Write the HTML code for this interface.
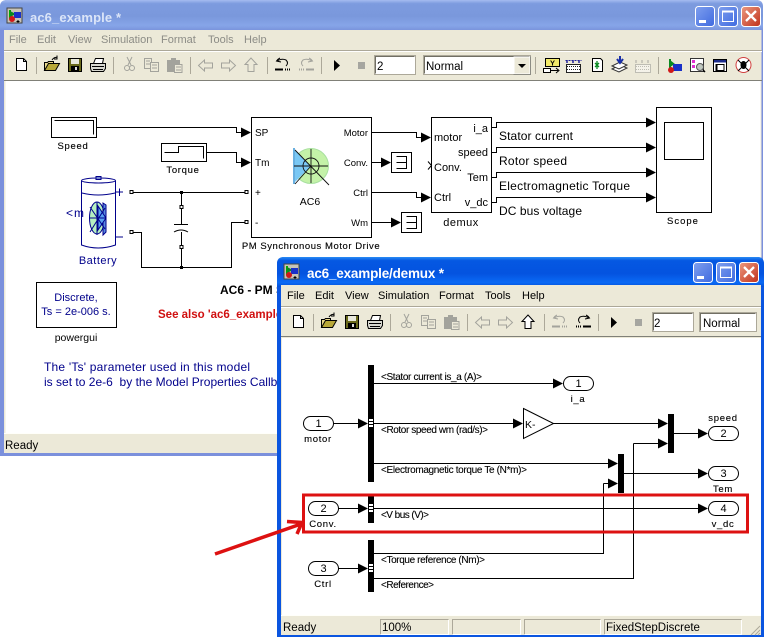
<!DOCTYPE html>
<html><head><meta charset="utf-8"><title>ac6_example</title>
<style>
html,body{margin:0;padding:0;background:#fff;width:765px;height:637px;overflow:hidden}
svg{display:block;position:absolute;left:0;top:0}
text{font-family:"Liberation Sans",sans-serif;fill:#000}
.c{text-anchor:middle}
.m{font-size:11px;fill:#8c8c86}
.mf{font-size:11px;fill:#000}
.l{font-size:9.5px;letter-spacing:.7px;stroke:#000;stroke-width:.12}
.s{font-size:11px}
.w{fill:none;stroke:#000;stroke-width:1;shape-rendering:crispEdges}
.b{fill:#fff;stroke:#000;stroke-width:1;shape-rendering:crispEdges}
.g{fill:none;stroke:#a3a39c;stroke-width:1}
</style></head><body>
<svg width="765" height="637" viewBox="0 0 765 637" xmlns="http://www.w3.org/2000/svg">
<defs>
<linearGradient id="tb" x1="0" y1="0" x2="0" y2="1"><stop offset="0" stop-color="#a5bcf0"/><stop offset=".12" stop-color="#7d9bdf"/><stop offset=".55" stop-color="#7a98dc"/><stop offset=".85" stop-color="#86a5e8"/><stop offset="1" stop-color="#7a94dc"/></linearGradient>
<linearGradient id="tf" x1="0" y1="0" x2="0" y2="1"><stop offset="0" stop-color="#2a8cf5"/><stop offset=".12" stop-color="#0558e2"/><stop offset=".55" stop-color="#0453e0"/><stop offset=".85" stop-color="#0a6af5"/><stop offset="1" stop-color="#0350d8"/></linearGradient>
<linearGradient id="bb" x1="0" y1="0" x2="1" y2="1"><stop offset="0" stop-color="#7f9fee"/><stop offset="1" stop-color="#3f6ae0"/></linearGradient>
<linearGradient id="bc" x1="0" y1="0" x2="1" y2="1"><stop offset="0" stop-color="#ec9a80"/><stop offset="1" stop-color="#c0301a"/></linearGradient>
<path id="ar" d="M-10 -5L0 0L-10 5z" fill="#000"/>
<g id="appicon">
<rect x="0" y="0" width="15" height="15" fill="#c8c4b8" stroke="#444"/>
<path d="M3 2v9" stroke="#0a0" stroke-width="2"/>
<path d="M3 3l6 3-6 3z" fill="#0a8a20"/>
<rect x="7" y="4" width="7" height="6" fill="#1a30c8"/>
<circle cx="5" cy="11" r="3" fill="#d01818"/>
<path d="M11 12v3M9.5 13.500h3" stroke="#000"/>
</g>
<g id="wbtn-min"><rect x=".5" y=".5" width="19" height="20" rx="3" fill="url(#bb)" stroke="#fff"/><rect x="4" y="14" width="7" height="3" fill="#fff"/></g>
<g id="wbtn-max"><rect x=".5" y=".5" width="19" height="20" rx="3" fill="url(#bb)" stroke="#fff"/><path d="M4.500 5.500h11v10h-11z" fill="none" stroke="#fff"/><path d="M4 5.500h12" stroke="#fff" stroke-width="2"/></g>
<g id="wbtn-close"><rect x=".5" y=".5" width="19" height="20" rx="3" fill="url(#bc)" stroke="#fff"/><path d="M5 5l10 10M15 5L5 15" stroke="#fff" stroke-width="2.300"/></g>
<g id="tools">
<path d="M16.500 58.500h7l3 3v9h-10z" fill="#fff" stroke="#000"/><path d="M23.500 58.500v3h3" fill="none" stroke="#000"/>
<path d="M36.500 57v17M113.500 57v17M190.500 57v17M267.500 57v17M321.500 57v17" stroke="#aca899"/>
<path d="M44.500 70.500v-8h3l1-1h5v2" fill="#e8d88a" stroke="#000"/>
<path d="M44.500 70.500l4-7h11l-4 7z" fill="#b8a838" stroke="#000"/>
<path d="M52 60q2-3 5-2.500M57 55.500v3.500h-3" fill="none" stroke="#000"/>
<rect x="68.500" y="58.500" width="13" height="13" fill="#6a6a1c" stroke="#000"/>
<rect x="71" y="59" width="8" height="5" fill="#e8e8dc"/><rect x="71" y="66" width="8" height="5" fill="#000"/><rect x="75" y="67" width="2" height="3" fill="#ddd"/>
<path d="M93.500 63.500l2-5h8l-1 5" fill="#fff" stroke="#000"/>
<path d="M90.500 63.500h15v5l-2 3h-12l-1-3z" fill="#d8d8d0" stroke="#000"/>
<path d="M92 66.500h12M93 69.500h10" stroke="#000"/>
<path d="M127 57l4 8M132 57l-4 8" class="g"/><circle cx="127" cy="68" r="2.500" class="g"/><circle cx="132" cy="68" r="2.500" class="g"/>
<path d="M144.500 58.500h7v10h-7z" fill="#ece9d8" stroke="#a3a39c"/><path d="M150.500 62.500h8v9h-8z" fill="#ece9d8" stroke="#a3a39c"/><path d="M146 61h4M146 64h4M152 65h5M152 68h5" stroke="#a3a39c"/>
<path d="M167.500 60.500h12v11h-12z" fill="#a3a39c" stroke="#a3a39c"/><rect x="171" y="58" width="5" height="3" fill="#a3a39c"/>
<path d="M174.500 64.500h7.500v8h-7.500z" fill="#ece9d8" stroke="#a3a39c"/><path d="M176 67h5M176 70h5" stroke="#a3a39c"/>
<path d="M198.500 65.500l6-5.500v3h8v5h-8v3z" fill="#ece9d8" stroke="#a3a39c"/>
<path d="M235.500 65.500l-6-5.500v3h-8v5h8v3z" fill="#ece9d8" stroke="#a3a39c"/>
<path d="M334 60v11l6-5.500z" fill="#000"/>
<rect x="358" y="62" width="7" height="7" fill="#a6a6a0"/>
</g>
</defs>

<!-- BACK WINDOW -->
<path d="M0 456V7Q0 0 7 0H756Q763 0 763 7V456z" fill="#7b90dc"/>
<path d="M0 30V7Q0 0 7 0H756Q763 0 763 7V30z" fill="url(#tb)"/>
<rect x="4" y="30" width="757.500" height="423" fill="#ece9d8"/>
<use href="#appicon" x="7" y="8"/>
<text x="30" y="22" font-size="13" font-weight="700" style="fill:#dbe5f8" textLength="91">ac6_example *</text>
<use href="#wbtn-min" x="695" y="6"/><use href="#wbtn-max" x="718" y="6"/><use href="#wbtn-close" x="741" y="6"/>
<text class="m" x="9" y="43">File</text><text class="m" x="37" y="43">Edit</text><text class="m" x="68" y="43">View</text><text class="m" x="101" y="43">Simulation</text><text class="m" x="161" y="43">Format</text><text class="m" x="208" y="43">Tools</text><text class="m" x="244" y="43">Help</text>
<path d="M4 50.500H762" stroke="#aca899"/><path d="M4 51.500H762" stroke="#fff"/>
<use href="#tools"/>
<path d="M245 64.500l6-6.500 6 6.500h-3v7h-6v-7z" fill="#ece9d8" stroke="#a3a39c"/>
<path d="M280 58q-2 1-3.500 3l4.500 1M277 61q5-3 9 -1q3 3 0 6" fill="none" stroke="#000"/><path d="M275 69.500h8" stroke="#000" stroke-width="2"/><path d="M285 69.500h5" stroke="#000" stroke-dasharray="1 1" stroke-width="2"/>
<path d="M309 58q2 1 3.500 3l-4.500 1M312 61q-5-3-9-1q-3 3 0 6" fill="none" stroke="#a3a39c"/><path d="M306 69.500h8" stroke="#a3a39c" stroke-width="2"/><path d="M299 69.500h5" stroke="#a3a39c" stroke-dasharray="1 1" stroke-width="2"/>
<rect x="374.500" y="55.500" width="41" height="19" fill="#fff" stroke="#aca899"/><path d="M375.500 73.500v-17h39" fill="none" stroke="#716f64"/>
<text x="377" y="70" font-size="11.500">2</text>
<rect x="423.500" y="55.500" width="107" height="19" fill="#fff" stroke="#aca899"/><path d="M424.500 73.500v-17h105" fill="none" stroke="#716f64"/>
<text x="426" y="70" font-size="11.500">Normal</text>
<rect x="514" y="57" width="16" height="17" fill="#ece9d8" stroke="#fff"/><path d="M530.500 56.500v18h-17" fill="none" stroke="#8c8c84"/><path d="M518 64h8l-4 4z" fill="#000"/>
<path d="M535.500 57v17M658.500 57v17" stroke="#aca899"/>
<rect x="545.500" y="58.500" width="14" height="8" fill="#f2ea6a" stroke="#000"/><text x="552.500" y="65.500" class="c" font-size="7.500" font-weight="700">Y</text>
<rect x="543.500" y="68.500" width="7" height="4" fill="#fff" stroke="#000"/><path d="M551 70.500h7M556 68l3 2.500-3 2.500" fill="none" stroke="#000"/>
<path d="M567 60v3M573 60v3M579 60v3" stroke="#22229a" stroke-width="1.500"/><path d="M565.500 60.500h16" stroke="#22229a" stroke-dasharray="2 1"/>
<rect x="566.500" y="64.500" width="14" height="8" fill="#fff" stroke="#222"/><path d="M567 66.500h14M567 69.500h14" stroke="#222" stroke-dasharray="1 1"/>
<path d="M592.500 58.500h8l2 2v11h-10z" fill="#fff" stroke="#000"/><path d="M597 61v4M595 63l2 2 2-2M597 69v-3M595 67l2-2 2 2" fill="none" stroke="#0a8a20" stroke-width="1.300"/>
<path d="M612 69l8-4 7 3-8 4z" fill="#fff" stroke="#333"/><path d="M612 66l8-4 7 3-8 4z" fill="#fff" stroke="#333"/><path d="M620 56v6M617 59l3 4 3-4" fill="none" stroke="#1a30a8" stroke-width="2"/>
<g opacity=".45"><path d="M636 60v3M642 60v3M648 60v3" stroke="#888" stroke-width="1.500"/><rect x="635.500" y="64.500" width="15" height="8" fill="#fff" stroke="#888"/><path d="M636 66.500h14M636 69.500h14" stroke="#888" stroke-dasharray="1 1"/></g>
<path d="M670 59v10" stroke="#0a8a20" stroke-width="2"/><path d="M670 60l5 4-5 3z" fill="#0a8a20"/><rect x="673" y="64" width="9" height="7" fill="#1a30c8"/><circle cx="671" cy="70" r="3" fill="#d01818"/>
<rect x="690.500" y="58.500" width="13" height="13" fill="#fff" stroke="#333"/><rect x="692" y="60" width="3" height="3" fill="#e030d0"/><rect x="692" y="65" width="3" height="3" fill="#e030d0"/><circle cx="700" cy="67" r="3.500" fill="#c0c8c0" stroke="#555"/><path d="M703 70l2 2" stroke="#000" stroke-width="1.500"/>
<rect x="713.500" y="59.500" width="13" height="12" fill="#fff" stroke="#000"/><rect x="714" y="60" width="12" height="2.500" fill="#1a2a8a"/><path d="M717 64.500h7v6h-7zM716 64v8" fill="none" stroke="#000"/>
<circle cx="743.500" cy="65" r="7.500" fill="#fff" stroke="#d04040"/><path d="M738 60l11 11M749 60l-11 11" stroke="#000" stroke-width="1"/><ellipse cx="743.500" cy="65" rx="3" ry="4" fill="#000"/>
<path d="M4 80.500H762" stroke="#808078"/>
<rect x="5.500" y="81" width="755" height="352" fill="#fff"/>
<path d="M4 433.500H762" stroke="#fffffa"/>
<text x="5" y="449" font-size="11.500">Ready</text>

<!-- BACK DIAGRAM -->
<rect class="b" x="51.500" y="117.500" width="45" height="20"/><path class="w" d="M54.500 120.500H93.500V134.500"/>
<text class="l c" x="73" y="149">Speed</text>
<rect class="b" x="161.500" y="143.500" width="45" height="18"/><path class="w" d="M164.500 152.500H178.500V146.500H203.500V158.500"/>
<text class="l c" x="183" y="173">Torque</text>
<path class="w" d="M97 127.500H236.500V132.500H241M207 152.500H236.500V162.500H241"/>
<use href="#ar" x="251" y="132.500"/><use href="#ar" x="251" y="162.500"/>
<g fill="none" stroke="#00008b">
<path d="M81.500 181V245Q98 251 115.500 245V181"/><ellipse cx="98.500" cy="180.500" rx="17" ry="2.500"/><rect x="96" y="176.500" width="5" height="3" fill="#7788cc"/>
<path d="M82 193Q98 197 115 193"/>
<path d="M115.500 192H123M119.500 188.500V196M116 237H123"/>
</g>
<text x="66" y="217" font-size="12" letter-spacing="1" style="fill:#00008b">&lt;m</text>
<ellipse cx="97" cy="218" rx="7.500" ry="16" fill="#b6f0c0" stroke="#00008b"/><path d="M103 203V235L106 232V205z" fill="#5a8ae0" stroke="#00008b"/><path d="M98 206l8 12-8 12z" fill="#5aa0f0" stroke="#00008b"/><path d="M89 218H106M97 202V235M90 207l15 22M90 232l15-24" stroke="#00008b" fill="none"/>
<text x="98" y="264" class="c" font-size="11" letter-spacing=".5" style="fill:#00008b">Battery</text>
<path class="w" d="M133 192.500H245M133 232.500H141.500V267.500H231.500V222.500H245M181.500 192.500V205M181.500 209V224M181.500 232V245M181.500 249V267.500"/>
<rect class="b" x="130" y="190.500" width="3" height="3"/><rect class="b" x="130" y="230.500" width="3" height="3"/><rect class="b" x="245" y="190.500" width="3" height="3"/><rect class="b" x="245" y="220.500" width="3" height="3"/>
<rect class="b" x="180" y="205.500" width="3" height="3"/><rect class="b" x="180" y="245.500" width="3" height="3"/>
<rect x="180" y="191" width="3" height="3"/><rect x="180" y="266" width="3" height="3"/>
<path d="M174 224.500H188" stroke="#000"/><path d="M174 232Q181 228 188 232" stroke="#000" fill="none"/>
<rect class="b" x="251.500" y="117.500" width="120" height="120"/>
<g font-size="10"><text x="255" y="136">SP</text><text x="255" y="166">Tm</text><text x="255" y="196">+</text><text x="255" y="226">-</text></g>
<g font-size="9.500" text-anchor="end"><text x="368" y="136">Motor</text><text x="368" y="166">Conv.</text><text x="368" y="196">Ctrl</text><text x="368" y="226">Wm</text></g>
<circle cx="311" cy="166" r="17.500" fill="#c4f2a8" stroke="#a8e0a0"/>
<path d="M294 149V183L311 166z" fill="#7ac8f4"/><path d="M294 148V184" stroke="#6ab0e0" stroke-width="2"/>
<path d="M294 166H328M311 149V183M295 150L329 185M295 184L311 166" stroke="#111" fill="none" stroke-width=".9"/><circle cx="311" cy="166" r="8" fill="none" stroke="#111" stroke-width=".9"/>
<text x="310" y="205" class="c" font-size="10.500">AC6</text>
<text class="l c" x="311" y="249" style="letter-spacing:.55px">PM Synchronous Motor Drive</text>
<path class="w" d="M372 132.500H416.500V137.500H421M372 162.500H381M372 192.500H416.500V197.500H421M372 222.500H391"/>
<use href="#ar" x="431" y="137.500"/><use href="#ar" x="391" y="162.500"/><use href="#ar" x="431" y="197.500"/><use href="#ar" x="401" y="222.500"/>
<rect class="b" x="391.500" y="152.500" width="20" height="20"/><path class="w" d="M396.500 156.500H406.500V168.500H396.500M396.500 162.500H406.500"/>
<rect class="b" x="401.500" y="212.500" width="20" height="20"/><path class="w" d="M406.500 216.500H416.500V228.500H406.500M406.500 222.500H416.500"/>
<rect class="b" x="431.500" y="117.500" width="60" height="95"/>
<text x="434" y="141" font-size="11">motor</text><text x="434" y="171" font-size="11">Conv.</text><text x="434" y="201" font-size="11">Ctrl</text>
<path d="M428 161.500l3.500 4-3.500 4" fill="none" stroke="#000"/>
<g font-size="11" text-anchor="end"><text x="488" y="132">i_a</text><text x="488" y="156">speed</text><text x="488" y="181">Tem</text><text x="488" y="206">v_dc</text></g>
<text x="461" y="226" class="c" font-size="11" letter-spacing=".5">demux</text>
<path class="w" d="M492 127.500H496.500V122.500H646M492 152.500H496.500V147.500H646M492 177.500H496.500V172.500H646M492 202.500H496.500V197.500H646"/>
<use href="#ar" x="656" y="122.500"/><use href="#ar" x="656" y="147.500"/><use href="#ar" x="656" y="172.500"/><use href="#ar" x="656" y="197.500"/>
<g font-size="12"><text x="499" y="140" textLength="74">Stator current</text><text x="499" y="165" textLength="68">Rotor speed</text><text x="499" y="190" textLength="131">Electromagnetic Torque</text><text x="499" y="215" textLength="83">DC bus voltage</text></g>
<rect class="b" x="656.500" y="107.500" width="55" height="105"/><rect class="b" x="664.500" y="122.500" width="39" height="37"/>
<text class="l c" x="683" y="224" style="letter-spacing:1px">Scope</text>
<text x="220" y="294" font-size="12" font-weight="700">AC6 - PM Synchronous Motor Drive</text>
<text x="158" y="318" font-size="11.500" font-weight="700" style="fill:#d01010">See also 'ac6_example_simple'</text>
<rect class="b" x="36.500" y="282.500" width="80" height="45"/>
<text x="76" y="301" class="c" font-size="11" style="fill:#00008b">Discrete,</text>
<text x="76" y="315" class="c" font-size="11" style="fill:#00008b">Ts = 2e-006 s.</text>
<text x="76" y="341" class="c" font-size="10.500">powergui</text>
<text x="44" y="371" font-size="12" style="fill:#00008b" textLength="206">The 'Ts' parameter used in this model</text>
<text x="44" y="386" font-size="12" style="fill:#00008b;white-space:pre" textLength="252">is set to 2e-6  by the Model Properties Callback</text>

<!-- FRONT WINDOW -->
<path d="M277 637V264Q277 257 284 257H757Q764 257 764 264V637z" fill="#0a55e0"/>
<path d="M277 287V264Q277 257 284 257H757Q764 257 764 264V287z" fill="url(#tf)"/>
<rect x="281" y="285" width="480" height="350" fill="#ece9d8"/>
<use href="#appicon" x="284" y="264"/>
<text x="307" y="278" font-size="13.500" font-weight="700" style="fill:#fff" textLength="137">ac6_example/demux *</text>
<use href="#wbtn-min" x="693" y="262"/><use href="#wbtn-max" x="716" y="262"/><use href="#wbtn-close" x="739" y="262"/>
<text class="mf" x="287" y="299">File</text><text class="mf" x="315" y="299">Edit</text><text class="mf" x="345" y="299">View</text><text class="mf" x="378" y="299">Simulation</text><text class="mf" x="439" y="299">Format</text><text class="mf" x="485" y="299">Tools</text><text class="mf" x="522" y="299">Help</text>
<path d="M281 306.500H761" stroke="#aca899"/><path d="M281 307.500H761" stroke="#fff"/>
<use href="#tools" transform="translate(277,257)"/>
<path d="M522 321.500l6-6.500 6 6.500h-3v7h-6v-7z" fill="#fff" stroke="#000"/>
<path d="M557 315q-2 1-3.500 3l4.500 1M554 318q5-3 9-1q3 3 0 6" fill="none" stroke="#a3a39c"/><path d="M552 326.500h8" stroke="#a3a39c" stroke-width="2"/><path d="M562 326.500h5" stroke="#a3a39c" stroke-dasharray="1 1" stroke-width="2"/>
<path d="M586 315q2 1 3.500 3l-4.500 1M589 318q-5-3-9-1q-3 3 0 6" fill="none" stroke="#000"/><path d="M583 326.500h8" stroke="#000" stroke-width="2"/><path d="M576 326.500h5" stroke="#000" stroke-dasharray="1 1" stroke-width="2"/>
<rect x="652.500" y="312.500" width="41" height="19" fill="#fff" stroke="#aca899"/><path d="M653.500 330.500v-17h39" fill="none" stroke="#716f64"/>
<text x="654" y="327" font-size="11.500">2</text>
<rect x="699.500" y="312.500" width="57" height="19" fill="#fff" stroke="#aca899"/><path d="M700.500 330.500v-17h55" fill="none" stroke="#716f64"/>
<text x="703" y="327" font-size="11.500">Normal</text>
<path d="M281 336.500H761" stroke="#808078"/>
<rect x="282" y="338" width="479" height="277" fill="#fff"/>
<path d="M281 615.500H761" stroke="#fffffa"/>
<text x="283" y="631" font-size="11.500">Ready</text>
<path d="M380.500 634.500V619.500H448.500M452.500 634.500V619.500H520.500M524.500 634.500V619.500H600.500M604.500 634.500V619.500H741.500" fill="none" stroke="#aca899"/>
<path d="M380.500 634.500H448.500V620M452.500 634.500H520.500V620M524.500 634.500H600.500V620M604.500 634.500H741.500V620" fill="none" stroke="#fff"/>
<text x="382" y="631" font-size="11.500">100%</text>
<text x="606" y="631" font-size="11.500">FixedStepDiscrete</text>
<path d="M751 635l9-9M755 635l5-5M758 635l2-2" stroke="#aca899" fill="none"/>

<!-- FRONT DIAGRAM -->
<g>
<rect x="368" y="365" width="6" height="117"/>
<rect x="668" y="414" width="6" height="39"/>
<rect x="618" y="454" width="6" height="39"/>
<rect x="368" y="496" width="6" height="27"/>
<rect x="368" y="540" width="6" height="52"/>
<rect x="369" y="419" width="4" height="2" fill="#fff"/><rect x="369" y="422" width="4" height="2" fill="#fff"/><rect x="369" y="425" width="4" height="2" fill="#fff"/>
<rect x="369" y="504" width="4" height="2" fill="#fff"/><rect x="369" y="507" width="4" height="2" fill="#fff"/><rect x="369" y="510" width="4" height="2" fill="#fff"/>
<rect x="369" y="564" width="4" height="2" fill="#fff"/><rect x="369" y="567" width="4" height="2" fill="#fff"/><rect x="369" y="570" width="4" height="2" fill="#fff"/>
</g>
<path class="w" d="M333 423.500H358M374 383.500H553M374 423.500H513M553 423.500H658M674 433.500H698M374 463.500H608M603.500 483.500H608M603.500 483.500V553.500H374M633.500 443.500H658M633.500 443.500V578.500H374M624 473.500H698M338 508.500H358M374 508.500H698M338 568.500H358"/>
<use href="#ar" x="368" y="423.500"/><use href="#ar" x="563" y="383.500"/><use href="#ar" x="523" y="423.500"/><use href="#ar" x="668" y="423.500"/><use href="#ar" x="668" y="443.500"/><use href="#ar" x="708" y="433.500"/><use href="#ar" x="618" y="463.500"/><use href="#ar" x="618" y="483.500"/><use href="#ar" x="708" y="473.500"/><use href="#ar" x="368" y="508.500"/><use href="#ar" x="708" y="508.500"/><use href="#ar" x="368" y="568.500"/>
<g fill="#fff" stroke="#000">
<rect x="303.500" y="416.500" width="30" height="14" rx="7"/><rect x="563.500" y="376.500" width="30" height="14" rx="7"/><rect x="708.500" y="426.500" width="30" height="14" rx="7"/><rect x="708.500" y="466.500" width="30" height="14" rx="7"/><rect x="708.500" y="501.500" width="30" height="14" rx="7"/><rect x="308.500" y="501.500" width="30" height="14" rx="7"/><rect x="308.500" y="561.500" width="30" height="14" rx="7"/>
</g>
<g font-size="11" text-anchor="middle"><text x="318.500" y="427">1</text><text x="578.500" y="387">1</text><text x="723.500" y="437">2</text><text x="723.500" y="477">3</text><text x="723.500" y="512">4</text><text x="323.500" y="512">2</text><text x="323.500" y="572">3</text></g>
<path d="M523.500 408.500L553.500 423.500L523.500 438.500z" fill="#fff" stroke="#000"/>
<text x="525" y="428" font-size="10.500">K-</text>
<text class="l c" x="318" y="442">motor</text><text class="l c" x="578" y="402">i_a</text><text class="l c" x="723" y="421">speed</text><text class="l c" x="723" y="492">Tem</text><text class="l c" x="723" y="527">v_dc</text><text class="l c" x="323" y="527">Conv.</text><text class="l c" x="323" y="587">Ctrl</text>
<g font-size="10" stroke="#000" stroke-width=".1"><text x="381" y="380" textLength="101">&lt;Stator current is_a (A)&gt;</text><text x="381" y="433" textLength="107">&lt;Rotor speed wm (rad/s)&gt;</text><text x="381" y="473" textLength="146">&lt;Electromagnetic torque Te (N*m)&gt;</text><text x="381" y="518" textLength="48">&lt;V bus (V)&gt;</text><text x="381" y="563" textLength="104">&lt;Torque reference (Nm)&gt;</text><text x="381" y="588" textLength="53">&lt;Reference&gt;</text></g>
<rect x="303.500" y="495" width="444" height="37" fill="none" stroke="#dd1111" stroke-width="3"/>
<path d="M215 554L301 524M287 521.500L302 522.500L297 534" fill="none" stroke="#dd1111" stroke-width="3.500"/>
</svg>
</body></html>
